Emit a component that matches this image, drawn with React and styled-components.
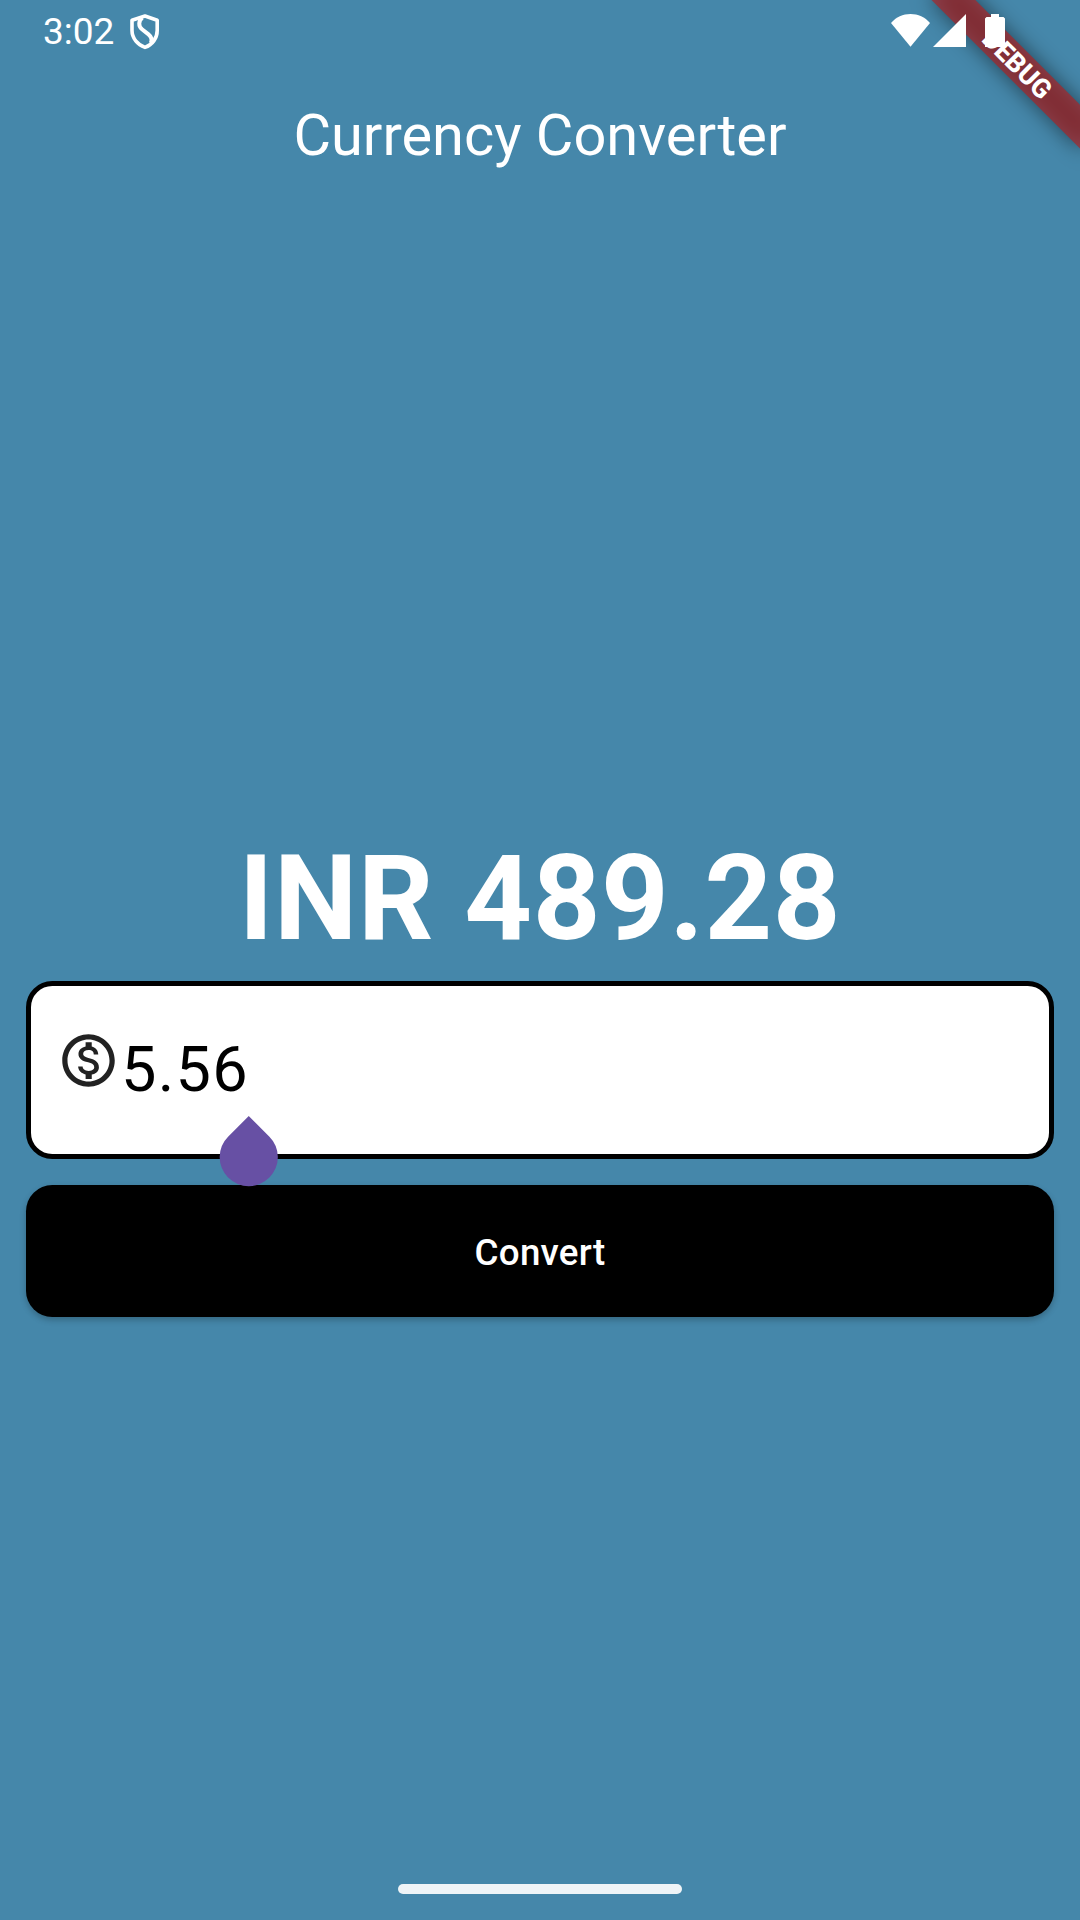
import React from "react";
import styled, { createGlobalStyle } from "styled-components";

const GlobalStyle = createGlobalStyle`
  *, *::before, *::after { box-sizing: border-box; }
  body { margin: 0; background: #4587aa; }
`;

const Screen = styled.div`
  position: relative;
  display: flex;
  flex-direction: column;
  width: 1080px;
  height: 1920px;
  overflow: hidden;
  background: #4587aa;
  color: #fff;
  font-family: Roboto, "Liberation Sans", sans-serif;
`;

const StatusBar = styled.header`
  position: relative;
  z-index: 2;
  display: flex;
  justify-content: space-between;
  align-items: center;
  height: 61px;
  padding: 0 75px 0 43px;
`;

const StatusGroup = styled.div`
  display: flex;
  align-items: center;
  gap: ${(p) => p.$gap}px;
  padding-top: ${(p) => p.$drop || 0}px;
`;

const Clock = styled.span`
  font-size: 37px;
  line-height: 43px;
`;

const Icon = styled.svg`
  display: block;
  flex: none;
  fill: currentColor;
`;

const DebugBanner = styled.div`
  position: absolute;
  z-index: 1;
  top: 0;
  left: 1080px;
  width: 0;
  height: 0;
  transform: rotate(45deg);
`;

const Ribbon = styled.div`
  position: absolute;
  top: 73.5px;
  left: -105px;
  width: 210px;
  height: 31.5px;
  padding: 1.5px 0 0 2px;
  background: rgba(183, 28, 28, 0.627);
  font-size: 26.775px;
  font-weight: 800;
  line-height: 31.5px;
  text-align: center;

  &::before {
    content: "";
    position: absolute;
    z-index: -1;
    inset: 0;
    background: rgba(0, 0, 0, 0.5);
    filter: blur(10.4px);
  }
`;

const AppBar = styled.div`
  display: flex;
  align-items: center;
  justify-content: center;
  height: 147px;
`;

const Title = styled.h1`
  margin: 0;
  font-size: 57.75px;
  font-weight: 400;
  line-height: 68px;
`;

const Content = styled.main`
  flex: 1;
  display: flex;
  flex-direction: column;
  padding: 621px 26.25px 0;
`;

const Result = styled.output`
  display: block;
  margin-bottom: 13px;
  font-size: 118.125px;
  font-weight: 700;
  line-height: 139px;
  letter-spacing: 0.656px;
  text-align: center;
`;

const AmountField = styled.div`
  position: relative;
  display: flex;
  align-items: center;
  height: 178.4px;
  margin-bottom: 26.1px;
  padding: 0 26px 0 25.5px;
  border: 5.25px solid #000;
  border-radius: 26.25px;
  background: #fff;
  color: #000;
`;

const CurrencyIcon = styled(Icon)`
  margin-bottom: 20px;
  color: #222222;
`;

const Amount = styled.span`
  margin-left: 1.2px;
  font-size: 63px;
  line-height: 74px;
  letter-spacing: 1.3125px;
`;

const CursorHandle = styled.i`
  position: absolute;
  top: 142px;
  left: 189.2px;
  width: 57.5px;
  height: 57.5px;
  border-radius: 0 50% 50% 50%;
  background: #6750a4;
  transform: rotate(45deg);
`;

const ConvertButton = styled.button`
  height: 131.25px;
  padding: 3px 0 0;
  border: 0;
  border-radius: 26.25px;
  background: #000;
  box-shadow: 0 3px 6px rgba(0, 0, 0, 0.24);
  color: #fff;
  font: 500 36.75px/52px Roboto, "Liberation Sans", sans-serif;
  letter-spacing: 0.2625px;
`;

const NavigationBar = styled.footer`
  display: flex;
  justify-content: center;
  height: 36px;
`;

const HomeIndicator = styled.div`
  width: 284px;
  height: 10px;
  border-radius: 5px;
  background: #eff4f7;
`;

const ShieldIcon = () => (
  <Icon width="30" height="36" viewBox="0 0 30 36" aria-hidden="true">
    <path
      d="M15 2 27.2 6.2V16.500C27.200 24.200 22.400 30.700 15 33.400 7.600 30.700 2 24.200 2 16.500V6.200Z"
      fill="none"
      stroke="currentColor"
      strokeWidth="3.6"
      strokeLinejoin="round"
    />
    <path
      d="M12.300 3.800C8.300 7 8.300 12.300 12 15.300L18.500 20.400C21.700 23 22.500 25.500 20.800 29"
      fill="none"
      stroke="currentColor"
      strokeWidth="4"
    />
  </Icon>
);

const WifiIcon = () => (
  <Icon width="39" height="33" viewBox="0 0 39 33" aria-hidden="true">
    <path d="M0 9C5 3 12 0 19.500 0S34 3 39 9L19.500 32.700Z" />
  </Icon>
);

const SignalIcon = () => (
  <Icon width="33" height="33" viewBox="0 0 33 33" aria-hidden="true">
    <path d="M33 0V33H0Z" />
  </Icon>
);

const BatteryIcon = () => (
  <Icon width="20" height="33" viewBox="0 0 20 33" aria-hidden="true">
    <path d="M6 0H14V3H18.500L20 4.500V33H0V4.500L1.500 3H6Z" />
  </Icon>
);

const DollarIcon = () => (
  <CurrencyIcon width="63" height="63" viewBox="0 0 24 24" aria-hidden="true">
    <path d="M12 2C6.48 2 2 6.48 2 12s4.48 10 10 10 10-4.48 10-10S17.52 2 12 2zm0 18c-4.41 0-8-3.59-8-8s3.59-8 8-8 8 3.59 8 8-3.59 8-8 8zm.31-8.86c-1.77-.45-2.34-.94-2.34-1.67 0-.84.79-1.43 2.1-1.43 1.38 0 1.9.66 1.94 1.64h1.71c-.05-1.34-.87-2.57-2.49-2.97V5H10.9v1.69c-1.51.32-2.72 1.3-2.72 2.81 0 1.79 1.49 2.69 3.66 3.21 1.95.46 2.34 1.15 2.34 1.87 0 .53-.39 1.39-2.1 1.39-1.6 0-2.23-.72-2.32-1.64H8.04c.1 1.7 1.36 2.66 2.86 2.97V19h2.34v-1.67c1.52-.29 2.72-1.16 2.73-2.77-.01-2.2-1.9-2.96-3.66-3.42z" />
  </CurrencyIcon>
);

export default function App() {
  return (
    <>
      <GlobalStyle />
      <Screen>
        <StatusBar>
          <StatusGroup $gap={16} $drop={2}>
            <Clock>3:02</Clock>
            <ShieldIcon />
          </StatusGroup>
          <StatusGroup $gap={3}>
            <WifiIcon />
            <StatusGroup $gap={19}>
              <SignalIcon />
              <BatteryIcon />
            </StatusGroup>
          </StatusGroup>
        </StatusBar>
        <DebugBanner>
          <Ribbon>DEBUG</Ribbon>
        </DebugBanner>
        <AppBar>
          <Title>Currency Converter</Title>
        </AppBar>
        <Content>
          <Result>INR 489.28</Result>
          <AmountField>
            <DollarIcon />
            <Amount>5.56</Amount>
            <CursorHandle />
          </AmountField>
          <ConvertButton type="button">Convert</ConvertButton>
        </Content>
        <NavigationBar>
          <HomeIndicator />
        </NavigationBar>
      </Screen>
    </>
  );
}
